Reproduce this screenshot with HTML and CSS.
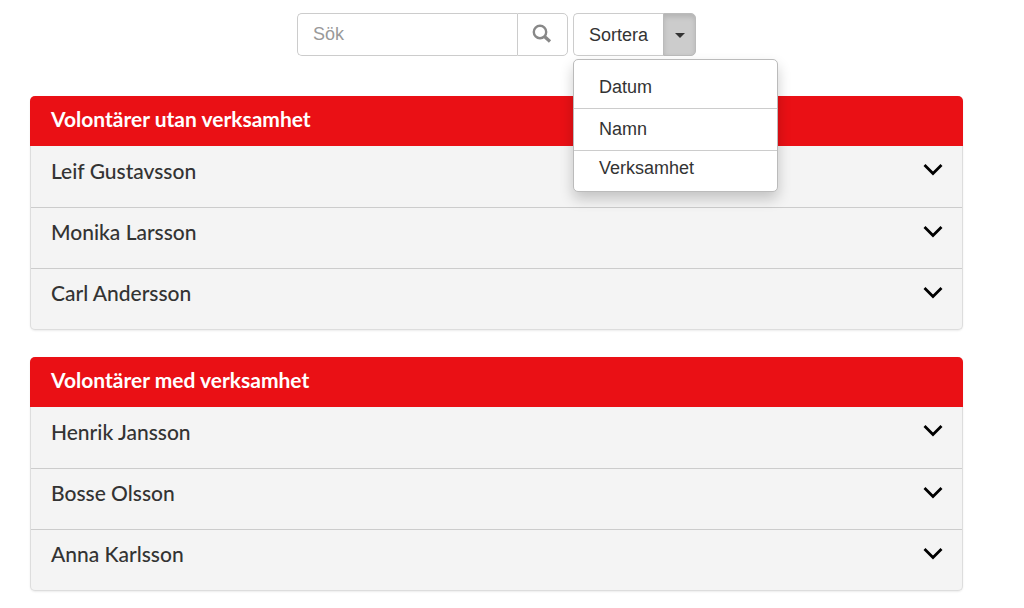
FILE: index.html
```
<!DOCTYPE html>
<html lang="sv">
<head>
    <meta charset="utf-8">
    <title>Volontärer</title>
    <link rel="stylesheet" href="styles.css">
</head>
<body>
    <svg width="0" height="0" class="symbols">
        <symbol id="chevron" viewBox="0 0 20 14">
            <path d="M1.5 2 L10 10.5 L18.5 2" fill="none" stroke="#000" stroke-width="2.8"/>
        </symbol>
    </svg>
    <div class="container">
        <div class="toolbar">
            <form class="search">
                <input type="text" class="search-input" placeholder="Sök" aria-label="Sök">
                <button type="button" class="search-button" aria-label="Sök">
                    <svg width="20" height="20" viewBox="0 0 20 20" fill="none" stroke="#888">
                        <circle cx="8" cy="8" r="6.2" stroke-width="2.4"/>
                        <path d="M12.2 12.2 L18 17.5" stroke-width="3.2"/>
                    </svg>
                </button>
            </form>
            <div class="sort">
                <button type="button" class="sort-button">Sortera</button>
                <button type="button" class="sort-toggle" aria-label="Visa sortering" aria-expanded="true"><span class="caret"></span></button>
                <ul class="menu">
                    <li><a href="#">Datum</a></li>
                    <li><a href="#">Namn</a></li>
                    <li><a href="#">Verksamhet</a></li>
                </ul>
            </div>
        </div>

        <section class="panel">
            <h2>Volontärer utan verksamhet</h2>
            <button type="button" class="row">Leif Gustavsson <svg class="chevron"><use href="#chevron"/></svg></button>
            <button type="button" class="row">Monika Larsson <svg class="chevron"><use href="#chevron"/></svg></button>
            <button type="button" class="row">Carl Andersson <svg class="chevron"><use href="#chevron"/></svg></button>
        </section>

        <section class="panel">
            <h2>Volontärer med verksamhet</h2>
            <button type="button" class="row">Henrik Jansson <svg class="chevron"><use href="#chevron"/></svg></button>
            <button type="button" class="row">Bosse Olsson <svg class="chevron"><use href="#chevron"/></svg></button>
            <button type="button" class="row">Anna Karlsson <svg class="chevron"><use href="#chevron"/></svg></button>
        </section>
    </div>
</body>
</html>
```

FILE: styles.css
```
* {
    box-sizing: border-box;
}

body {
    margin: 0;
    background-color: #fff;
    color: #333;
    font-family: "Liberation Sans", Arial, sans-serif;
    font-size: 18px;
}

button,
input {
    margin: 0;
    font: inherit;
    color: inherit;
}

.symbols {
    display: block;
}

.container {
    padding: 13px 61px 16px 30px;
}

.toolbar {
    display: flex;
    justify-content: center;
    gap: 5px;
    margin-bottom: 40px;
}

.search,
.sort {
    display: flex;
    height: 43px;
}

.search-input {
    width: 220px;
    padding: 0 15px;
    border: 1px solid #ccc;
    border-right: none;
    border-radius: 5px 0 0 5px;
}

.search-input::placeholder {
    color: #999;
}

.search-button {
    width: 51px;
    padding: 0 0 2px;
    border: 1px solid #ccc;
    border-radius: 0 5px 5px 0;
    background-color: #fff;
}

.search-button svg {
    vertical-align: middle;
}

.sort {
    position: relative;
}

.sort-button {
    padding: 2px 15px 0;
    border: 1px solid #ccc;
    border-right: none;
    border-radius: 5px 0 0 5px;
    background-color: #fff;
}

.sort-toggle {
    display: flex;
    align-items: center;
    justify-content: center;
    width: 33px;
    padding: 2px 0 0;
    border: 1px solid #bbb;
    border-radius: 0 5px 5px 0;
    background-color: #ccc;
    box-shadow: inset 0 3px 5px rgba(0, 0, 0, 0.12);
}

.caret {
    border-top: 5px solid #333;
    border-left: 5px solid transparent;
    border-right: 5px solid transparent;
}

.menu {
    position: absolute;
    top: 100%;
    left: 0;
    z-index: 10;
    width: 205px;
    margin: 3px 0 0;
    padding: 7px 0 5px;
    list-style: none;
    border: 1px solid #bbb;
    border-radius: 5px;
    background-color: #fff;
    box-shadow: 0 7px 14px rgba(0, 0, 0, 0.2);
}

.menu li {
    border-bottom: 1px solid #ccc;
    line-height: 41px;
}

.menu li:last-child {
    border-bottom: none;
    line-height: 35px;
}

.menu a {
    display: block;
    padding: 0 25px;
    color: #333;
    text-decoration: none;
}

.panel {
    margin-bottom: 27px;
    border: 1px solid #ddd;
    border-top: none;
    border-radius: 5px;
    background-color: #f4f4f4;
    box-shadow: 0 1px 2px rgba(0, 0, 0, 0.08);
    font-family: Lato, sans-serif;
    font-size: 21px;
}

.panel h2 {
    margin: 0 -1px;
    padding: 9px 21px 13px;
    border-radius: 5px 5px 0 0;
    background-color: #ea1015;
    color: #fff;
    font-size: 21px;
    font-weight: bold;
    line-height: 28px;
}

.row {
    display: flex;
    justify-content: space-between;
    align-items: center;
    width: 100%;
    height: 61px;
    padding: 0 19px 13px 20px;
    border: none;
    background: none;
    font-weight: 500;
    text-align: left;
}

.row + .row {
    border-top: 1px solid #ccc;
}

.chevron {
    width: 20px;
    height: 14px;
}
```
